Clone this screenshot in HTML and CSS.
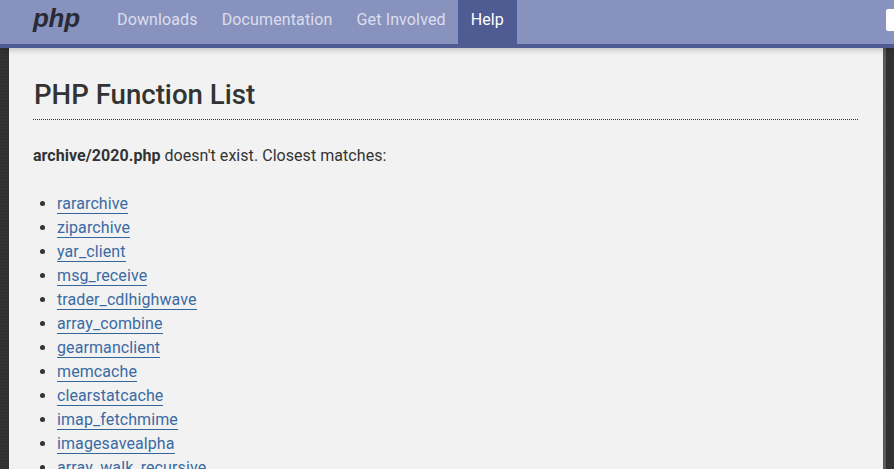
FILE: index.html
```html
<!DOCTYPE html>
<html lang="en">
<head>
<meta charset="utf-8">
<title>PHP Function List</title>
<link rel="stylesheet" href="styles.css">
</head>
<body>
<header class="navbar">
  <a class="logo" href="#">php</a>
  <nav class="nav">
    <a href="#">Downloads</a>
    <a href="#">Documentation</a>
    <a href="#">Get Involved</a>
    <a class="active" href="#">Help</a>
  </nav>
  <div class="search"></div>
</header>
<div class="page">
  <main class="content">
    <h1>PHP Function List</h1>
    <p class="intro"><b>archive/2020.php</b> doesn't exist. Closest matches:</p>
    <ul class="matches">
      <li><a href="#">rararchive</a></li>
      <li><a href="#">ziparchive</a></li>
      <li><a href="#">yar_client</a></li>
      <li><a href="#">msg_receive</a></li>
      <li><a href="#">trader_cdlhighwave</a></li>
      <li><a href="#">array_combine</a></li>
      <li><a href="#">gearmanclient</a></li>
      <li><a href="#">memcache</a></li>
      <li><a href="#">clearstatcache</a></li>
      <li><a href="#">imap_fetchmime</a></li>
      <li><a href="#">imagesavealpha</a></li>
      <li><a href="#">array_walk_recursive</a></li>
    </ul>
  </main>
</div>
</body>
</html>
```
FILE: styles.css
```css
* { box-sizing: border-box; }
html, body { margin: 0; height: 100%; overflow: hidden; }
body {
  background-color: #333;
  background-image: radial-gradient(#2a2a2a 1px, transparent 1px);
  background-size: 3px 3px;
  font-family: Roboto, sans-serif;
  font-size: 16px;
  color: #333;
}
.navbar {
  display: flex;
  align-items: stretch;
  height: 48px;
  background: #8892bf;
  border-bottom: 4px solid #4f5b93;
  box-shadow: 0 2px 6px rgba(0,0,0,.2);
  position: relative;
  z-index: 1;
}
.logo {
  margin-left: 33px;
  width: 72px;
  font: italic 700 26px/37px "Liberation Sans", sans-serif;
  letter-spacing: -.3px;
  color: #2a2a36;
  text-decoration: none;
}
.nav { display: flex; }
.nav a {
  padding: 0 12px;
  line-height: 40px;
  letter-spacing: .13px;
  color: #e2e4ef;
  text-decoration: none;
  opacity: .92;
}
.nav a.active { background: #4f5b93; color: #fff; opacity: 1; padding: 0 13px; }
.search {
  margin: 9px 0 0 auto;
  width: 8px;
  height: 22px;
  background: #fff;
  border-radius: 2px 0 0 2px;
}
.page { padding: 0 8px 0 9px; }
.content {
  background: #f2f2f2;
  border-right: 3px solid #5a5a5a;
  padding: 28px 25px 24px 24px;
  min-height: 500px;
}
h1 {
  margin: 0 0 24px;
  padding-bottom: 5px;
  padding-left: 1px;
  border-bottom: 1px dotted #333;
  font-size: 27.6px;
  line-height: 38px;
  font-weight: 500;
}
.intro { margin: 0 0 24px; line-height: 24px; letter-spacing: .05px; }
.matches { margin: 0; padding: 0 0 0 24px; line-height: 24px; letter-spacing: .1px; }
.matches a { color: #3a6aa3; text-decoration: none; border-bottom: 1px solid #369; }
```
